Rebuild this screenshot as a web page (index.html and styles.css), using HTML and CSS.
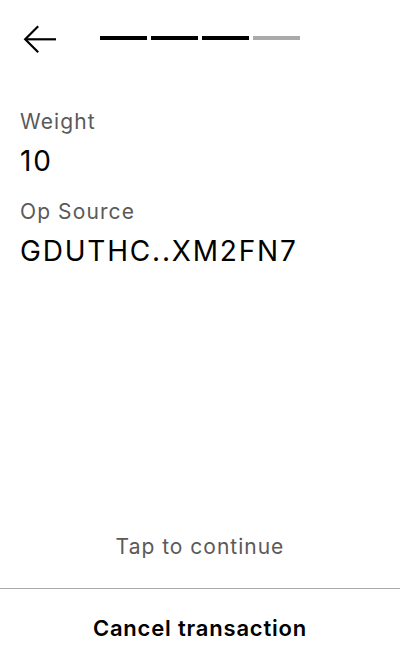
FILE: index.html
```html
<!DOCTYPE html>
<html>
<head>
<meta charset="utf-8">
<link rel="stylesheet" href="styles.css">
</head>
<body>
<div class="page">
  <header class="header">
    <svg class="back" width="34" height="30" viewBox="0 0 34 30" fill="none" stroke="#000" stroke-width="2.2">
      <path d="M2.5 15.3 H33"/>
      <path d="M15.2 2.3 L2.2 15.3 L15.2 28.3"/>
    </svg>
    <div class="progress">
      <span class="bar done"></span>
      <span class="bar done"></span>
      <span class="bar done"></span>
      <span class="bar"></span>
    </div>
  </header>
  <main class="content">
    <div class="field">
      <div class="label">Weight</div>
      <div class="value">10</div>
    </div>
    <div class="field">
      <div class="label">Op Source</div>
      <div class="value">GDUTHC..XM2FN7</div>
    </div>
  </main>
  <div class="tap">Tap to continue</div>
  <div class="cancel">Cancel transaction</div>
</div>
</body>
</html>
```
FILE: styles.css
```css
* { box-sizing: border-box; }
html, body { margin: 0; padding: 0; background: #fff; }
body { font-family: Inter, "Noto Sans", sans-serif; color: #000; }
.page { width: 400px; height: 672px; display: flex; flex-direction: column; }
.header { height: 78px; flex: none; display: flex; align-items: center; padding-left: 23px; }
.back { display: block; flex: none; }
.progress { display: flex; gap: 4px; margin-left: 43px; margin-top: -2px; }
.bar { width: 47px; height: 4px; background: #aaaaaa; }
.bar.done { background: #000; }
.content { flex: 1; padding: 32px 20px 0; display: flex; flex-direction: column; gap: 21px; }
.label { font-size: 21px; line-height: 24px; letter-spacing: 1.1px; color: #5a5a5a; }
.value { font-size: 28px; line-height: 36px; letter-spacing: 1.8px; color: #000; margin-top: 9px; }
.tap { flex: none; text-align: center; font-size: 21px; line-height: 30px; letter-spacing: 1px; color: #5a5a5a; padding-bottom: 26px; border-bottom: 1px solid #aaaaaa; }
.cancel { flex: none; text-align: center; font-size: 22px; font-weight: 600; letter-spacing: 0.8px; line-height: 78px; height: 83px; padding-bottom: 5px; }
```
